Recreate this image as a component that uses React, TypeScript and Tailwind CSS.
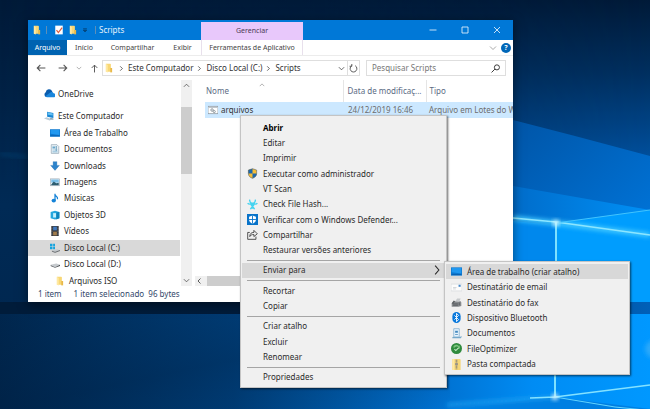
import React, { useState } from 'react';

interface IconProps {
  name: string;
  className?: string;
}

// 16x16 shell icons
const shapes: Record<string, React.ReactNode> = {
  folder: (
    <>
      <path d="M3 1h7l1 1v12H3z" fill="#f8d775" />
      <path d="M10 8h3v7h-3z" fill="#e9b949" />
      <path d="M3 1l3 2v12l-3-1z" fill="#ffe9a2" />
    </>
  ),
  cloud: (
    <>
      <path d="M3 13a4 4 0 0 1-.5-7A5 5 0 0 1 12 5l1 8z" fill="#0a5cae" />
      <path d="M4 13.500h9.500a3 3 0 0 0 .5-6 4 4 0 0 0-5-1L2 12z" fill="#1a86dc" />
    </>
  ),
  computer: (
    <>
      <path d="M5 1l10 2v8L5 9z" fill="#1786d4" />
      <path d="M6 2l8 2v3L6 6z" fill="#62bdf0" />
      <path d="M0 12l4-2 9 3-4 2z" fill="#b9cbd8" />
      <path d="M10 11l5 1v2l-5-1z" fill="#7795a8" />
    </>
  ),
  desktop: (
    <>
      <rect x="0" y="2" width="16" height="12" fill="#0b78d0" />
      <path d="M1 3h14v8L1 9z" fill="#2098f0" />
      <rect x="1" y="12" width="14" height="1" fill="#0a5aa6" />
    </>
  ),
  document: (
    <>
      <path d="M2 1h9l3 3v11H2z" fill="#e9f1f6" stroke="#879cab" />
      <path d="M4 4h4v3H4zM4 9h8v1H4zM4 12h8v1H4z" fill="#6aa7cb" />
      <path d="M10 3v8" stroke="#77a7c2" strokeWidth="2" />
    </>
  ),
  download: <path d="M5 1h6v6h4l-7 8-7-8h4z" fill="#2d83cb" stroke="#1b67aa" strokeWidth=".5" />,
  image: (
    <>
      <rect x="1" y="3" width="14" height="11" fill="#eef2f5" stroke="#99a7b1" />
      <path d="M2 4h12v5H2z" fill="#79bee8" />
      <path d="M2 12l4-5 4 3 4-1v4H2z" fill="#2d5d70" />
    </>
  ),
  music: (
    <>
      <ellipse cx="6" cy="12" rx="3.500" ry="3" fill="#1583d8" />
      <path d="M8 1v11M8 2c0 4 5 3 4 8" stroke="#1583d8" strokeWidth="2" fill="none" />
    </>
  ),
  cube: (
    <>
      <path d="M1 3l7-2 7 2v10l-7 2-7-2z" fill="#23a7de" />
      <path d="M5 5h5v7H5z" fill="#c4f0fd" />
      <path d="M10 4l5-1v10l-5 2z" fill="#0b84bd" />
    </>
  ),
  video: (
    <>
      <rect x="2" y="0" width="12" height="16" fill="#34373d" />
      <path d="M5 1h6v6H5z" fill="#4178bd" />
      <path d="M5 9h6v6H5z" fill="#a17c4d" />
      <path d="M3 1v14M13 1v14" stroke="#c4c7cc" strokeDasharray="1 1.500" />
    </>
  ),
  driveWin: (
    <>
      <path d="M0 1h4v4H0zM5 1h3v4H5zM0 6h4v4H0zM5 6h3v4H5z" fill="#15a3de" />
      <path d="M3 12l9-2 4 2-7 3-5-2z" fill="#c3c8cc" />
      <path d="M3 13l5 2 8-3" stroke="#34383c" fill="none" />
    </>
  ),
  drive: (
    <>
      <path d="M1 9l9-2 6 2-8 4-6-2z" fill="#c6cace" />
      <path d="M1 10l7 3v1l-7-3zM8 13l8-4v2l-8 3z" fill="#45494d" />
    </>
  ),
  batch: (
    <>
      <rect x="0" y="2" width="16" height="12" fill="#fff" stroke="#75808a" />
      <path d="M1 4h14" stroke="#9aa5af" />
      <circle cx="6.500" cy="8" r="2" fill="none" stroke="#7d8790" strokeWidth="1.300" />
      <circle cx="10" cy="10.500" r="1.700" fill="none" stroke="#7d8790" strokeWidth="1.300" />
    </>
  ),
  shield: (
    <>
      <path d="M8 1l6 2v5c0 4-3 6-6 7-3-1-6-3-6-7V3z" fill="#f6bd35" />
      <path d="M8 1L2 3v5h6zM8 8v7c3-1 6-3 6-7z" fill="#1d68ad" />
      <path d="M8 1l6 2v5c0 4-3 6-6 7-3-1-6-3-6-7V3z" fill="none" stroke="#4b5965" strokeWidth=".8" />
    </>
  ),
  biohazard: (
    <g fill="none" stroke="#45d3f0" strokeWidth="2">
      <circle cx="8" cy="8" r="2" fill="#45d3f0" />
      <path d="M4 1c-1 4 2 5 4 6 2-1 5-2 4-6M1 6c2 3 5 0 7 2 2-2 5 1 7-2M8 8v6M5 15c1-2 2-3 3-4 1 1 2 2 3 4" />
    </g>
  ),
  defender: (
    <>
      <rect width="16" height="16" fill="#0873c9" />
      <path d="M8 2l5 2v4c0 3-2 5-5 6-3-1-5-3-5-6V4z" fill="#fff" />
      <path d="M8 2v12M3 8h10" stroke="#0873c9" strokeWidth="1.300" />
    </>
  ),
  share: (
    <path
      d="M4 5H1v10h12v-4M4 11c0-4 2-6 6-6V2l5 5-5 4V8c-3 0-5 1-6 3z"
      fill="none"
      stroke="#333"
      strokeWidth="1.200"
    />
  ),
  mail: (
    <>
      <rect x="0" y="3" width="16" height="10" fill="#fcfcfc" stroke="#d4d8db" />
      <path d="M3 8h5M3 10h4" stroke="#c0c7cc" />
      <rect x="11" y="4" width="3" height="3" fill="#4386c8" />
    </>
  ),
  fax: (
    <>
      <path d="M1 9l4-3h9l1 2v5l-4 1H1z" fill="#85898c" />
      <path d="M6 6l3-4h5l-2 5z" fill="#c7cacc" />
      <path d="M3 10h7M3 12h7M12 8v4" stroke="#4b4e51" />
      <path d="M1 9l3-4 2 1-3 4z" fill="#5c6063" />
    </>
  ),
  bluetooth: (
    <>
      <rect x="2" y="0" width="12" height="16" rx="6" fill="#0878dc" />
      <path d="M5 5l6 6-3 3V2l3 3-6 6" fill="none" stroke="#fff" strokeWidth="1.300" />
    </>
  ),
  docs: (
    <>
      <path d="M4 1h8v12H4z" fill="#e6f3fc" stroke="#76a6ca" />
      <path d="M6 4h4v3H6zM6 9h4v1H6z" fill="#4388bd" />
      <path d="M2 14h12l1-2" stroke="#74a8ca" strokeWidth="1.500" fill="none" />
    </>
  ),
  optimizer: (
    <>
      <circle cx="8" cy="8" r="8" fill="#2f8a3d" />
      <path d="M3 6a5 5 0 0 1 9-1l1-2v5H9l2-2a4 4 0 0 0-6 1z" fill="#7cc47e" />
      <path d="M5 9l2 2 4-4" fill="none" stroke="#c9edc9" strokeWidth="1.500" />
    </>
  ),
  zip: (
    <>
      <path d="M2 0h11l1 1v15H2z" fill="#f5d677" />
      <path d="M2 0h3v16H2z" fill="#ffe9a1" />
      <path d="M8 1v14" stroke="#8a867b" strokeWidth="2.500" strokeDasharray="1.500 .7" />
      <rect x="6" y="6" width="4" height="3" fill="#99948a" />
    </>
  ),
  check: (
    <>
      <path d="M2 1h12v14H2z" fill="#fff" />
      <path d="M4 8l3 4 6-8" fill="none" stroke="#df5c3c" strokeWidth="2" />
    </>
  ),
};

const Icon: React.FC<IconProps> = ({ name, className = 'size-[10px]' }) => (
  <svg viewBox="0 0 16 16" className={`shrink-0 ${className}`} aria-hidden="true">
    {shapes[name]}
  </svg>
);

const Line: React.FC<{ d: string; className?: string }> = ({ d, className = 'size-2' }) => (
  <svg viewBox="0 0 16 16" className={`shrink-0 ${className}`} fill="none" stroke="currentColor" strokeWidth="1.700" aria-hidden="true">
    <path d={d} />
  </svg>
);

const RIGHT = 'M5 3l5 5-5 5';
const DOWN = 'M2 5l6 6 6-6';
const UP = 'M2 11l6-6 6 6';

const folders = [
  { label: 'Este Computador', icon: 'computer', indent: 'pl-4' },
  { label: 'Área de Trabalho', icon: 'desktop', indent: 'pl-[22px]' },
  { label: 'Documentos', icon: 'document', indent: 'pl-[22px]' },
  { label: 'Downloads', icon: 'download', indent: 'pl-[22px]' },
  { label: 'Imagens', icon: 'image', indent: 'pl-[22px]' },
  { label: 'Músicas', icon: 'music', indent: 'pl-[22px]' },
  { label: 'Objetos 3D', icon: 'cube', indent: 'pl-[22px]' },
  { label: 'Vídeos', icon: 'video', indent: 'pl-[22px]' },
  { label: 'Disco Local (C:)', icon: 'driveWin', indent: 'pl-[22px]' },
  { label: 'Disco Local (D:)', icon: 'drive', indent: 'pl-[22px]' },
  { label: 'Arquivos ISO', icon: 'folder', indent: 'pl-[27px]' },
];

const menuGroups = [
  [
    { label: 'Abrir' },
    { label: 'Editar' },
    { label: 'Imprimir' },
    { label: 'Executar como administrador', icon: 'shield' },
    { label: 'VT Scan' },
    { label: 'Check File Hash...', icon: 'biohazard' },
    { label: 'Verificar com o Windows Defender...', icon: 'defender' },
    { label: 'Compartilhar', icon: 'share' },
    { label: 'Restaurar versões anteriores' },
  ],
  [{ label: 'Enviar para', submenu: true }],
  [{ label: 'Recortar' }, { label: 'Copiar' }],
  [{ label: 'Criar atalho' }, { label: 'Excluir' }, { label: 'Renomear' }],
  [{ label: 'Propriedades' }],
] as { label: string; icon?: string; submenu?: boolean }[][];

const sendTo = [
  { label: 'Área de trabalho (criar atalho)', icon: 'desktop' },
  { label: 'Destinatário de email', icon: 'mail' },
  { label: 'Destinatário do fax', icon: 'fax' },
  { label: 'Dispositivo Bluetooth', icon: 'bluetooth' },
  { label: 'Documentos', icon: 'docs' },
  { label: 'FileOptimizer', icon: 'optimizer' },
  { label: 'Pasta compactada', icon: 'zip' },
];

const Wallpaper: React.FC = () => (
  <svg viewBox="0 0 650 409" preserveAspectRatio="none" className="absolute inset-0 size-full" aria-hidden="true">
    <defs>
      <linearGradient id="base" x1="0" y1="0" x2="0" y2="1">
        <stop offset="0" stopColor="#001a38" />
        <stop offset=".5" stopColor="#002a55" />
        <stop offset="1" stopColor="#00254c" />
      </linearGradient>
      <linearGradient id="sky" x1="0" y1="0" x2="0" y2="1">
        <stop offset="0" stopColor="#001a38" />
        <stop offset=".4" stopColor="#002f5f" />
        <stop offset="1" stopColor="#0058ad" />
      </linearGradient>
      <linearGradient id="beam" x1="0" y1="0" x2="1" y2="1">
        <stop offset="0" stopColor="#00509f" />
        <stop offset="1" stopColor="#0078df" />
      </linearGradient>
      <linearGradient id="glow" x1="0" y1="0" x2="1" y2="0">
        <stop offset="0" stopColor="#0064c0" />
        <stop offset="1" stopColor="#0090f6" />
      </linearGradient>
      <linearGradient id="floor" x1="0" y1="0" x2="1" y2="0">
        <stop offset="0" stopColor="#00264d" />
        <stop offset=".36" stopColor="#00407c" />
        <stop offset=".68" stopColor="#0072d2" />
        <stop offset=".82" stopColor="#008cf4" />
        <stop offset="1" stopColor="#0098ff" />
      </linearGradient>
      <linearGradient id="shade" x1="0" y1="0" x2="1" y2="1">
        <stop offset="0" stopColor="#001c3c" stopOpacity="0" />
        <stop offset=".5" stopColor="#001c3c" stopOpacity=".3" />
        <stop offset="1" stopColor="#001c3c" stopOpacity="0" />
      </linearGradient>
      <linearGradient id="band" x1="0" y1="0" x2="1" y2="0">
        <stop offset="0" stopColor="#001c3a" />
        <stop offset=".4" stopColor="#001b3a" />
        <stop offset="1" stopColor="#0060b8" />
      </linearGradient>
      <linearGradient id="fade" x1="0" y1="0" x2="1" y2="0">
        <stop offset="0" stopColor="#fff" stopOpacity="0" />
        <stop offset="1" stopColor="#fff" />
      </linearGradient>
      <mask id="fadeIn">
        <rect width="650" height="409" fill="url(#fade)" />
      </mask>
      <filter id="soft" x="-20%" y="-50%" width="140%" height="200%">
        <feGaussianBlur stdDeviation="2" />
      </filter>
    </defs>
    <rect width="650" height="409" fill="url(#base)" />
    <rect width="650" height="180" fill="url(#sky)" mask="url(#fadeIn)" />
    <path d="M480 112L513 120 575 136 650 156V260H480z" fill="url(#beam)" />
    <path d="M480 182L513 186 650 210V320H480z" fill="url(#glow)" />
    <path d="M556 223L650 210V306H556z" fill="#009dfe" />
    <path d="M480 218L556 225V306H480z" fill="#0088ed" />
    <path d="M0 154l28 3" stroke="#07406f" strokeWidth="2" filter="url(#soft)" />
    <rect y="314" width="650" height="95" fill="url(#floor)" />
    <rect y="314" width="450" height="95" fill="url(#shade)" />
    <path d="M447 409l108-12 95 12z" fill="#007fe2" />
    <rect y="302" width="650" height="12" fill="url(#band)" />
    <path d="M513 218l43 5 94 12" stroke="#42c8ff" strokeWidth="5" fill="none" filter="url(#soft)" />
    <path d="M513 218l43 4 94 13" stroke="#8ce6ff" strokeWidth="1.600" fill="none" />
    <path d="M556 223l94-13" stroke="#42c4fd" strokeWidth="1" />
    <path d="M556 222v80M555 314v83" stroke="#57d2ff" strokeWidth="2" />
    <path d="M556 222v80M555 314v83" stroke="#a5efff" strokeWidth="1" />
    <path d="M447 405l108-8" stroke="#1f9ff0" strokeWidth="3" filter="url(#soft)" />
    <path d="M530 398l25-1 95-12" stroke="#84e2ff" strokeWidth="1.600" fill="none" />
    <path d="M555 397l60 10 30 3" stroke="#62d4ff" strokeWidth="1" fill="none" />
    <circle cx="556" cy="223" r="3" fill="#dffaff" filter="url(#soft)" />
    <circle cx="555" cy="397" r="3" fill="#eafcff" filter="url(#soft)" />
    <circle cx="654" cy="349" r="9" fill="#2aa9fb" filter="url(#soft)" />
  </svg>
);

const TitleBar: React.FC = () => (
  <header className="flex h-5 items-stretch bg-[#0078d7] text-[#e6f2fb]">
    <div className="flex w-[173px] items-center pl-1">
      <Icon name="folder" />
      <span className="ml-1 h-2 w-px bg-[#5d8fb8]" />
      <button className="ml-[7px]" aria-label="Propriedades"><Icon name="check" /></button>
      <button className="ml-1" aria-label="Nova pasta"><Icon name="folder" /></button>
      <button className="ml-1 text-[#06243f]" aria-label="Personalizar">
        <Line d="M3 5h10M4 9h8l-4 4z" className="size-[6px]" />
      </button>
      <span className="ml-[7px] mr-[3px] h-2 w-px bg-[#5d8fb8]" />
      <h1>Scripts</h1>
    </div>
    <div className="mt-[2px] flex w-[102px] items-center justify-center bg-[#e8c8fb] text-[7px] text-[#4b3a55]">
      Gerenciar
    </div>
    <div className="ml-auto flex items-center gap-6 pr-3">
      <button aria-label="Minimizar"><Line d="M1 8h14" /></button>
      <button aria-label="Maximizar"><Line d="M2 2h12v12H2z" /></button>
      <button aria-label="Fechar"><Line d="M2 2l12 12M14 2L2 14" /></button>
    </div>
  </header>
);

const Ribbon: React.FC = () => (
  <nav className="flex h-4 items-stretch border-b border-[#ececec] text-[7px] text-[#444]">
    <button className="w-[39px] bg-[#0063b1] text-white">Arquivo</button>
    <button className="w-[34px]">Início</button>
    <button className="w-[63px]">Compartilhar</button>
    <button className="w-[37px]">Exibir</button>
    <button className="w-[102px] border-x border-[#e8e0ec]">Ferramentas de Aplicativo</button>
    <div className="ml-auto flex items-center gap-1 pr-[2px]">
      <button className="text-[#999]" aria-label="Expandir"><Line d={DOWN} /></button>
      <button className="flex size-[10px] items-center justify-center rounded-full bg-[#0067b8] font-bold text-white" aria-label="Ajuda">?</button>
    </div>
  </nav>
);

const AddressBar: React.FC = () => {
  const [search, setSearch] = useState('');

  return (
    <div className="flex items-center px-[7px] pt-1 text-[#333]">
      <div className="flex w-[67px] shrink-0 items-center gap-2 pl-px text-[#555]">
        <button aria-label="Voltar"><Line d="M15 8H2M7 3L2 8l5 5" className="size-[10px]" /></button>
        <button className="ml-1" aria-label="Avançar"><Line d="M1 8h13M9 3l5 5-5 5" className="size-[10px]" /></button>
        <button className="text-[#888]" aria-label="Locais recentes"><Line d={DOWN} className="size-[6px]" /></button>
        <button aria-label="Acima"><Line d="M8 15V2M3 7l5-5 5 5" className="size-[9px]" /></button>
      </div>
      <div className="flex h-4 grow items-center border border-[#dedede]">
        <Icon name="folder" className="ml-px size-[10px]" />
        <Line d={RIGHT} className="ml-1 mr-[3px] size-[7px]" />
        <a href="#computador">Este Computador</a>
        <Line d={RIGHT} className="mx-[3px] size-[7px]" />
        <a href="#c">Disco Local (C:)</a>
        <Line d={RIGHT} className="mx-[3px] size-[7px]" />
        <a href="#scripts">Scripts</a>
        <button className="ml-auto mr-[2px]" aria-label="Locais anteriores"><Line d={DOWN} className="size-[7px]" /></button>
        <button className="flex h-full w-3 items-center justify-center border-l border-[#dedede] text-[#555]" aria-label="Atualizar">
          <Line d="M5 3a6 6 0 1 0 6 0M5 0v4H1" className="size-[9px]" />
        </button>
      </div>
      <label className="ml-[6px] flex h-4 w-[140px] shrink-0 items-center border border-[#dedede] px-[5px]">
        <input
          type="text"
          value={search}
          onChange={(e) => setSearch(e.target.value)}
          placeholder="Pesquisar Scripts"
          aria-label="Pesquisar Scripts"
          className="w-full min-w-0 outline-none placeholder:text-[#777]"
        />
        <Line d="M15 6a4.500 4.500 0 1 1-9 0a4.500 4.500 0 1 1 9 0M7 9l-6 6" className="size-[9px]" />
      </label>
    </div>
  );
};

const Sidebar: React.FC = () => (
  <aside className="flex w-[165px] shrink-0">
    <nav className="w-[152px] pt-[5px]">
      <a href="#onedrive" className="mb-[6px] flex h-[17px] items-center gap-[3px] pl-4">
        <Icon name="cloud" className="size-[11px]" />
        OneDrive
      </a>
      <ul className="flex h-[181px] flex-col">
        {folders.map((f) => (
          <li key={f.label} className="flex-1">
            <a
              href={`#${f.icon}`}
              className={`flex h-full items-center gap-1 ${f.indent} ${f.icon === 'driveWin' ? 'bg-[#d9d9d9]' : ''}`}
            >
              <Icon name={f.icon} />
              {f.label}
            </a>
          </li>
        ))}
      </ul>
    </nav>
    <div className="mb-[3px] ml-px flex w-[11px] flex-col items-center bg-[#f0f0f0] py-[2px] text-[#444]">
      <Line d={UP} className="size-[7px]" />
      <div className="mt-[18px] h-[67px] w-full bg-[#cdcdcd]" />
      <Line d={DOWN} className="mt-auto size-[7px]" />
    </div>
  </aside>
);

const FileList: React.FC = () => (
  <section className="flex min-w-0 grow flex-col overflow-hidden pb-[3px] pl-3">
    <table className="w-full table-fixed text-left">
      <thead className="text-[#5b6b83]">
        <tr className="h-[22px]">
          <th className="w-[138px] pl-px font-normal">
            <div className="flex items-center">
              Nome
              <Line d={UP} className="mb-3 ml-[30px] size-[6px] text-[#888]" />
            </div>
          </th>
          <th className="w-[83px] truncate border-l border-[#e5e5e5] pl-1 font-normal">Data de modificaç...</th>
          <th className="border-l border-[#e5e5e5] pl-[3px] font-normal">Tipo</th>
        </tr>
      </thead>
      <tbody className="text-[#6d6d6d]">
        <tr className="h-4 bg-[#cce8ff]">
          <td className="pl-[3px]">
            <div className="flex items-center gap-[3px] text-[#333]">
              <Icon name="batch" />
              arquivos
            </div>
          </td>
          <td className="pl-[5px]">24/12/2019 16:46</td>
          <td className="overflow-hidden whitespace-nowrap pl-[3px]">Arquivo em Lotes do W</td>
        </tr>
      </tbody>
    </table>
    <div className="-ml-[10px] mt-auto flex h-[10px] items-center bg-[#f0f0f0] text-[#444]">
      <Line d="M11 3L6 8l5 5" className="mr-1 size-[8px]" />
      <div className="h-full w-[140px] bg-[#cdcdcd]" />
    </div>
  </section>
);

const ContextMenu: React.FC = () => (
  <div
    role="menu"
    className="absolute left-60 top-[115px] flex h-[273px] w-[207px] flex-col border border-[#c4c4c4] bg-[#f0f0f0] px-px pb-[2px] pt-1 shadow-[1px_1px_2px_rgba(0,0,0,0.6)]"
  >
    {menuGroups.map((group, i) => (
      <React.Fragment key={i}>
        {i > 0 && <hr className="mx-[5px] my-[2px] border-[#a5a5a5]" />}
        {group.map((item) => (
          <button
            key={item.label}
            role="menuitem"
            className={`flex flex-1 items-center text-left ${item.submenu ? 'bg-[#d8d8d8]' : ''} ${item.label === 'Abrir' ? 'font-bold text-black' : ''}`}
          >
            <span className="flex w-[21px] justify-center">
              {item.icon && <Icon name={item.icon} className="size-[11px]" />}
            </span>
            {item.label}
            {item.submenu && <Line d="M5 1l6 7-6 7" className="ml-auto mr-[3px] size-[10px]" />}
          </button>
        ))}
      </React.Fragment>
    ))}
  </div>
);

const SendToMenu: React.FC = () => (
  <div
    role="menu"
    className="absolute left-[444px] top-[261px] flex h-[114px] w-[186px] flex-col border border-[#c4c4c4] bg-[#f0f0f0] px-px py-[2px] shadow-[1px_1px_2px_rgba(0,0,0,0.6)]"
  >
    {sendTo.map((item, i) => (
      <button
        key={item.label}
        role="menuitem"
        className={`flex flex-1 items-center text-left ${i === 0 ? 'bg-[#d8d8d8]' : ''}`}
      >
        <span className="flex w-[21px] justify-center">
          <Icon name={item.icon} className="size-[11px]" />
        </span>
        {item.label}
      </button>
    ))}
  </div>
);

const App: React.FC = () => {
  return (
    <div className="relative min-h-screen overflow-hidden bg-[#002a55] font-['Noto_Sans',sans-serif] text-[8px] leading-[10px] text-[#2a2a2a]">
      <Wallpaper />
      <main className="relative ml-7 mr-[137px] mt-5 flex flex-col bg-white shadow-[0_2px_10px_rgba(0,0,0,0.5)]">
        <TitleBar />
        <Ribbon />
        <AddressBar />
        <div className="flex pt-1">
          <Sidebar />
          <FileList />
        </div>
        <footer className="flex gap-3 pb-[3px] pl-[10px] text-[#33476b]">
          <span>1 item</span>
          <span>1 item selecionado&nbsp; 96 bytes</span>
        </footer>
      </main>
      <ContextMenu />
      <SendToMenu />
    </div>
  );
};

export default App;
